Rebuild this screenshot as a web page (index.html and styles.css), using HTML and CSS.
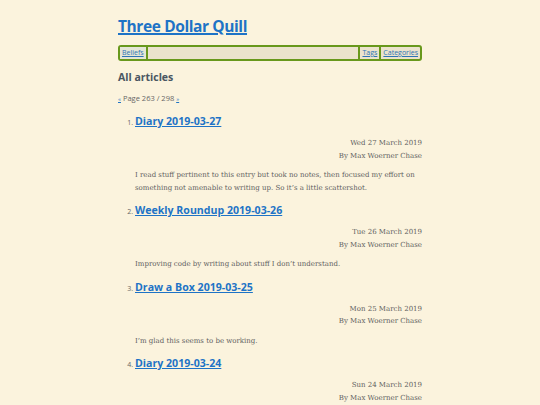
FILE: index.html
```html
<!DOCTYPE html>
<html lang="en">
<head>
<meta charset="utf-8">
<title>Three Dollar Quill</title>
<link rel="stylesheet" href="styles.css">
</head>
<body>
<div class="page">
  <header class="site-header">
    <h1 class="site-title"><a href="#">Three Dollar Quill</a></h1>
    <nav class="nav">
      <a href="#" class="nav-link current">Beliefs</a>
      <span class="nav-fill"></span>
      <a href="#" class="nav-link">Tags</a>
      <a href="#" class="nav-link">Categories</a>
    </nav>
  </header>
  <main>
    <h2 class="section-title">All articles</h2>
    <p class="pager"><a href="#">«</a> Page 263 / 298 <a href="#">»</a></p>
    <ol class="articles">
      <li class="article">
        <h3 class="article-title"><a href="#">Diary 2019-03-27</a></h3>
        <div class="meta">
          <div>Wed 27 March 2019</div>
          <div>By Max Woerner Chase</div>
        </div>
        <p class="summary">I read stuff pertinent to this entry but took no notes, then focused my effort on something not amenable to writing up. So it’s a little scattershot.</p>
      </li>
      <li class="article">
        <h3 class="article-title"><a href="#">Weekly Roundup 2019-03-26</a></h3>
        <div class="meta">
          <div>Tue 26 March 2019</div>
          <div>By Max Woerner Chase</div>
        </div>
        <p class="summary">Improving code by writing about stuff I don’t understand.</p>
      </li>
      <li class="article">
        <h3 class="article-title"><a href="#">Draw a Box 2019-03-25</a></h3>
        <div class="meta">
          <div>Mon 25 March 2019</div>
          <div>By Max Woerner Chase</div>
        </div>
        <p class="summary">I’m glad this seems to be working.</p>
      </li>
      <li class="article">
        <h3 class="article-title"><a href="#">Diary 2019-03-24</a></h3>
        <div class="meta">
          <div>Sun 24 March 2019</div>
          <div>By Max Woerner Chase</div>
        </div>
        <p class="summary">Wrote a little, read a little.</p>
      </li>
    </ol>
  </main>
</div>
</body>
</html>
```
FILE: styles.css
```css
html, body {
  margin: 0;
  padding: 0;
  background: #fbf3dd;
}
body {
  font-family: "DejaVu Serif", "Liberation Serif", serif;
  color: #555;
}
.page {
  width: 304px;
  margin: 0 auto;
  padding-top: 14px;
}
a {
  color: #1f74c4;
}
.site-title {
  margin: 0;
  font-family: "Open Sans", "Noto Sans", sans-serif;
  font-size: 15.5px;
  font-weight: 700;
  line-height: 24px;
  letter-spacing: -0.4px;
}
.site-title a {
  color: #1e73c6;
  text-decoration-thickness: 1.5px;
}
.nav {
  margin-top: 7px;
  display: flex;
  align-items: stretch;
  height: 12px;
  border: 2px solid #68981c;
  border-radius: 3px;
  background: #ebe3cd;
  font-family: "Open Sans", "Noto Sans", sans-serif;
  font-size: 7px;
  line-height: 12px;
}
.nav-link {
  padding: 0 2px;
  color: #2e74b5;
  border-right: 2px solid #68981c;
}
.nav-fill {
  flex: 1;
  border-right: 2px solid #68981c;
}
.nav-link:last-child {
  border-right: 0;
}
.current {
  background: #e4e6d6;
}
.section-title {
  margin: 8px 0 0;
  font-family: "Open Sans", "Noto Sans", sans-serif;
  font-size: 10.5px;
  font-weight: 700;
  line-height: 16px;
  color: #4a5661;
}
.pager {
  margin: 7px 0 0;
  font-family: "Open Sans", "Noto Sans", sans-serif;
  font-size: 7.5px;
  line-height: 12px;
  color: #666;
}
.pager a {
  font-size: 6px;
}
.articles {
  margin: 6px 0 0;
  padding-left: 17px;
}
.article::marker {
  font-family: "Open Sans", "Noto Sans", sans-serif;
  font-size: 7px;
  color: #666;
}
.article-title {
  margin: 0;
  font-family: "Open Sans", "Noto Sans", sans-serif;
  font-size: 10.6px;
  font-weight: 700;
  line-height: 20px;
}
.article-title a {
  color: #1e73c6;
}
.meta {
  margin-top: 6px;
  text-align: right;
  font-size: 7px;
  line-height: 12.5px;
  color: #5f5f5f;
}
.summary {
  margin: 7px 0 6px;
  font-size: 7px;
  line-height: 12.5px;
  color: #5f5f5f;
}
```
